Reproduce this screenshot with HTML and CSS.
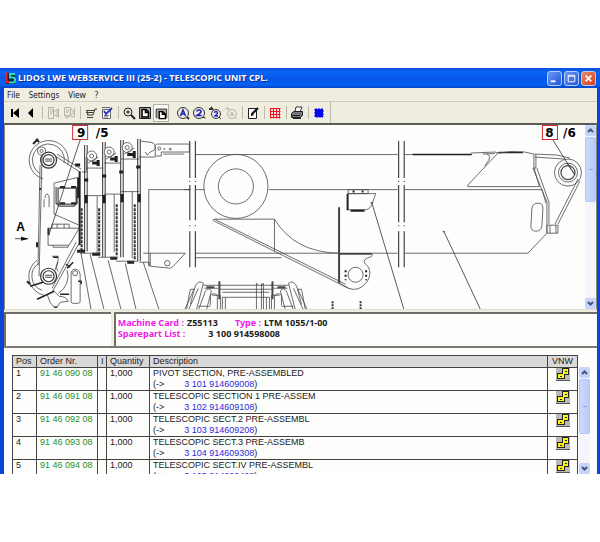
FILE: index.html
```
<!DOCTYPE html>
<html lang="en">
<head>
<meta charset="utf-8">
<title>LIDOS LWE WEBSERVICE III</title>
<link rel="stylesheet" href="styles.css">
</head>
<body>
<svg class="defs" aria-hidden="true">
  <symbol id="vnw" viewBox="0 0 14 13">
    <path fill="#b9b9b9" d="M0 0h14v12H0z"/><path fill="#555" d="M0 12h14v1H0z"/>
    <path fill="#222" d="M6 0h7v7H6zM1 5h8v6H1z"/>
    <path fill="#fbf414" d="M7 1h5v5H7zM2 6h6v4H2z"/>
    <path fill="#222" d="M9 3h2v1H9zM4 8h2v1H4z"/>
  </symbol>
  <symbol id="up" viewBox="0 0 11 11"><path fill="none" stroke="#43557f" stroke-width="2" d="M3 7l2.500-2.500L8 7"/></symbol>
  <symbol id="down" viewBox="0 0 11 11"><path fill="none" stroke="#43557f" stroke-width="2" d="M3 4l2.500 2.500L8 4"/></symbol>
</svg>
<main class="window">
  <header class="titlebar">
    <svg class="logo" viewBox="0 0 11 12"><path fill="#1b2438" d="M1 1h9v11H1z"/><path fill="none" stroke="#e8232b" stroke-width="2" d="M1.500 0v10h3"/><path fill="none" stroke="#35d6c4" stroke-width="2" d="M10 2H5v3.500h3q2 0 2 2.500t-2 2.500H4"/></svg>
    <h1>LIDOS LWE WEBSERVICE III (25-2) - TELESCOPIC UNIT CPL.</h1>
    <button class="cap" aria-label="Minimize"><svg viewBox="0 0 14 14"><path fill="#fff" d="M3 9h5v2H3z"/></svg></button>
    <button class="cap" aria-label="Maximize"><svg viewBox="0 0 14 14"><path fill="none" stroke="#fff" d="M3.500 3.500h7v7h-7zM3 4.500h8"/></svg></button>
    <button class="cap close" aria-label="Close"><svg viewBox="0 0 14 14"><path fill="none" stroke="#fff" stroke-width="2" d="M4 4l6 6M10 4l-6 6"/></svg></button>
  </header>
  <nav class="menu"><button>File</button><button>Settings</button><button>View</button><button>?</button></nav>
  <div class="toolbar">
    <button aria-label="First"><svg viewBox="0 0 16 16"><path d="M4 4h2v8H4zM12 3v10L6 8z"/></svg></button>
    <button aria-label="Previous"><svg viewBox="0 0 16 16"><path d="M10 3v10L5 8z"/></svg></button>
    <i class="sep"></i>
    <button aria-label="Previous page"><svg viewBox="0 0 16 16" fill="none" stroke="#b5b3a6"><path d="M3.500 2.500h5v11h-5zM5 5h3M5 7h3M5 9h2M13.500 3v10M12 4v8L8 8z"/></svg></button>
    <button aria-label="Next page"><svg viewBox="0 0 16 16" fill="none" stroke="#b5b3a6"><path d="M3.500 2.500h6v8h-6zM5 5h3M5 7h3M13.500 3v9h-4M5 10v3l4-2M10 4l3 3-3 3"/></svg></button>
    <i class="sep"></i>
    <button aria-label="Order"><svg viewBox="0 0 16 16" fill="none" stroke="#3c3c3c"><path d="M14 4h-2l-2 6H4M3 5.500h8M3 7.500h7M4 6l1 4M4 12.500h6"/></svg></button>
    <button aria-label="Order list"><svg viewBox="0 0 16 16" fill="none"><path fill="#fff" stroke="#666" d="M3.500 4.500h8v9h-8z"/><path stroke="#667" d="M5 10.500h5M5 12h4M3 2.500h8"/><path stroke="#2a35c8" stroke-width="2" d="M5 6l2 3 6-6"/></svg></button>
    <i class="sep"></i>
    <button aria-label="Zoom"><svg viewBox="0 0 16 16" fill="none" stroke="#222"><circle cx="7" cy="7" r="4"/><path d="M5 7h4M7 5v4"/><path stroke-width="2" d="M10 10l4 4"/></svg></button>
    <button aria-label="Fit page"><svg viewBox="0 0 16 16" stroke="#222"><path fill="#aaa" d="M2.500 2.500h11v11h-11z"/><path fill="#fff" stroke="#000" stroke-width="1.500" d="M5 4.500h4l2.500 2.500v5H5zM8.500 4.500V7.500h3"/></svg></button>
    <button class="pressed" aria-label="Fit width"><svg viewBox="0 0 16 16" stroke="#222"><path fill="#aaa" d="M2.500 14V3.500h12V14"/><path fill="#fff" stroke="#000" stroke-width="1.500" d="M6 14.500V6.500h4l3 2.500v5.500zM9.500 6.500V9.500h3"/></svg></button>
    <i class="sep blank"></i>
    <button aria-label="Find A"><svg viewBox="0 0 16 16" fill="none" stroke="#343434"><circle cx="8" cy="8" r="5.500"/><path stroke-width="2" d="M12 12l2 2"/><path stroke="#2222c8" stroke-width="1.600" d="M5.500 11L8 5l2.500 6M6.500 9h3"/></svg></button>
    <button aria-label="Find 2"><svg viewBox="0 0 16 16" fill="none" stroke="#343434"><circle cx="8" cy="8" r="5.500"/><path d="M11 12.500h3v1"/><path stroke="#2222c8" stroke-width="1.600" d="M6 6.500q0-1.500 2-1.500t2 1.500-4 4h4.500"/></svg></button>
    <button aria-label="Find next 2"><svg viewBox="0 0 16 16" fill="none" stroke="#343434"><circle cx="9" cy="9" r="4.500"/><path d="M12 12l2 2"/><path stroke-width="2" d="M2 4h4M4 2l2 3"/><path stroke="#2222c8" stroke-width="1.400" d="M7.500 8q0-1.500 1.500-1.500t1.500 1.500-3 3H11"/></svg></button>
    <button aria-label="Find next A"><svg viewBox="0 0 16 16" fill="none" stroke="#b5b3a6"><circle cx="9" cy="9" r="4.500"/><path d="M12 12l2 2M2 4h4M4 2l2 3M7 11l2-4 2 4M8 10h2"/></svg></button>
    <i class="sep"></i>
    <button aria-label="Edit note"><svg viewBox="0 0 16 16"><path fill="#fff" stroke="#222" d="M3.500 3.500h8v10h-8z"/><path stroke="#111" stroke-width="2" d="M13 3L7 9"/><path d="M6 8v3l3-1z"/></svg></button>
    <i class="sep"></i>
    <button aria-label="Grid"><svg viewBox="0 0 16 16"><path fill="#fbdada" d="M3 3h10v10H3z"/><path fill="none" stroke="#e01b25" stroke-width="1" d="M3.500 3v10.500M6.500 3v10.500M9.500 3v10.500M12.500 3v10.500M3 3.500h10.500M3 6.500h10.500M3 9.500h10.500M3 12.500h10.500"/></svg></button>
    <i class="sep"></i>
    <button aria-label="Print"><svg viewBox="0 0 16 16"><path fill="#fff" stroke="#333" d="M6 7l1-5h6l-2 5z"/><path fill="#777" stroke="#222" d="M2.500 8.500l2-2h9v4l-2 2h-9z"/><path stroke="#222" d="M4 13.500h8M3 10.500h8"/></svg></button>
    <i class="sep"></i>
    <button aria-label="Stop"><svg viewBox="0 0 16 16"><path fill="#0606ee" stroke="#0606ee" stroke-dasharray="2 1" d="M4 4h8v8H4z"/></svg></button>
    <i class="sep end"></i>
  </div>

  <section class="drawing" aria-label="Telescopic unit drawing">
    <svg class="plan" viewBox="5 125 579 184" fill="none" stroke="#4a4a4a" stroke-width=".8">
      <defs>
        <g id="halfrig">
          <path d="M184 310l12-26q3-4 7-1l-7 27M188 310l10-22M190 289h4l-4 15M198 310l7-19q4-5 6 0l-5 19M186 310l4-21M210 305v-10q3-3 7 0v15M203 285h18M204 288h14M212 295h8v14M198 306h12M222 297v13M225 297v13"/>
          <path stroke-width="2" d="M219 281v18M206 287h8"/>
        </g>
      </defs>
      <!-- main boom -->
      <path d="M195 154.500h202M404 154.500h66M184 189.500h6M195 189.500h9M268 189.500h129M404 189.500h137M148 189.500h42M195 253h143M371 253h26M404 253h123M195 257.500h86M150 253h35l-12 13-3 2-20-2z"/>
      <path stroke="#222" stroke-width="1" d="M189.500 141v37M195 141v37M189.500 185v35M195 185v35M189.500 231v36M195 231v36M398 141v37M403.500 141v37M398 185v37M403.500 185v37M398 231v36M403.500 231v36M189.500 181v1M195 181v1M189.500 225v1M195 225v1M398 181v1M403.500 181v1M398 225v1M403.500 225v1"/>
      <circle cx="235.500" cy="186.300" r="32"/><circle cx="235.500" cy="186.300" r="17.500"/><circle cx="167" cy="263" r="2.700"/>
      <!-- wedge and cylinder bracket -->
      <path d="M214 219h60v32M274 219q20 33 64 34M214 219l131 65M214 221l134 67M213 219v2"/>
      <path stroke="#444" stroke-width="2" d="M338.500 207v76M338 253.500h33"/>
      <path d="M371 253q2 3-2 4-7 2-5 6c6 4 7 12 2 19q-8 10-18 6l-9-5"/><circle cx="355" cy="274.500" r="7.500"/>
      <path stroke="#222" stroke-width="2" stroke-dasharray="2 2.500" d="M345 270v10M365.500 270v10"/>
      <path d="M347.500 189.500h20v4h-20zM347 193.500h28q-1 3-3 9-2 6-6 7h-19z"/>
      <path stroke="#222" stroke-width="2" d="M352 191.500h2M361 191.500h2M347 194v16M350 210.500h14"/>
      <path stroke="#333" d="M371 202l32.500 108M443 231l37 79"/>
      <path stroke="#333" stroke-width="2" d="M371 202v1M443 231v1M332 301v9M360 301v9" stroke-dasharray="2 1"/>
      <!-- boom head, right end -->
      <path stroke="#222" stroke-width="1.400" d="M412 154.500h59M498 152.500h24"/>
      <path d="M470 153l24-1 4 1 12-1.500 14 .5 9 2M482 154l12-.5M467 185l31-33M486 154q4 1 2 6l-4 6M467 185v1.500h71.500l-5.500-19"/>
      <path d="M534 154l22 1 13 3M534 157l22 1.500 8 .5M533 154v14h2v-14M532 168l14 34v31M536 168l12 34v22M541 189l4 14M546 233l-19 20M546 225h11v8h-11zM549 225v8M555 225v8M579 181l-22 43M577 179l-23 45"/>
      <circle cx="567" cy="172.500" r="13.500"/><circle cx="567" cy="172.500" r="9.500"/><circle cx="567" cy="172.500" r="7" stroke-width="1.200"/>
      <path d="M531 208q1-5 6-5t5 5l-1 18q-1 5-6 5t-5-5z"/>
      <path stroke="#333" d="M552 140l22 35M566 163l8 12"/>
      <!-- telescopic stages -->
      <path d="M86 168h17M104 163h17M121 159h18M139 157h16M86 195.500h17M104 194h17M121 191.500h18M82 172h4v-15M97 196v57M114 194v58M132 191v67M148.500 190v76M139 262h10v4M143 253h7"/>
      <path stroke="#333" stroke-width="1" d="M84.500 145v106M87 145v106M102.500 142v115M105 142v115M120.500 140v117M123 140v117M137.500 139v122M140 139v122"/>
      <path stroke="#333" stroke-width="2" stroke-dasharray="3 1" d="M81.500 208v43M99 208v46M116.500 204v52M134.500 204v56"/>
      <path stroke="#1f1f1f" stroke-width="2" d="M79.500 171v74"/>
      <g fill="#fff"><circle cx="91.500" cy="156" r="5"/><circle cx="109" cy="152" r="5"/><circle cx="127" cy="147.500" r="5"/></g>
      <circle cx="91.500" cy="156" r="2"/><circle cx="109" cy="152" r="2"/><circle cx="127" cy="147.500" r="2"/>
      <path stroke="#1f1f1f" stroke-width="3" d="M92 163h6M110 159h6M127 154.500h6M98 160v6M116 156v6M134 151v7M75 165h5M84 180h4M102 176h4M119 172h4M136 167h4M86 195v8M104 195v8M122 194v8M139 194v8M77 251h8M92 254h8M110 258h7M127 262h7"/>
      <path d="M80 253h20M98 257h20M116 261h22M88 163l10-6M106 159l10-6M124 154l10-6"/>
      <path d="M140 141l8 1q6 0 7 4t-5 6l-3 3-2-3M155 152v4h6v-4h28v-8h-31q-4 0-3 4zM163 154h21"/>
      <circle cx="159" cy="148.500" r="1.500"/><circle cx="170" cy="149" r="1"/><circle cx="164" cy="149" r=".5"/>
      <!-- boom head, left end -->
      <path d="M43 178.700A19.500 19.500 0 1 1 67.500 165M40 173.600A16 16 0 1 1 64 163"/>
      <g stroke="#333" stroke-width="1.200"><circle cx="48.500" cy="160" r="8"/><circle cx="48.500" cy="160" r="5.500"/><circle cx="48.500" cy="276" r="8"/><circle cx="48.500" cy="276" r="5.500"/></g>
      <circle cx="41.500" cy="151" r="4"/><circle cx="41.500" cy="151" r="1.500"/>
      <path stroke="#222" stroke-width="2" d="M33 144l5-5M36 139l3 3M37 242v5M27 281l3 3M40 188v2"/>
      <path stroke="#222" d="M45 159h7M45 161h7M45 275h7M45 277h7"/>
      <path d="M42 155l-3 121M40 165l-2 100M55 156l25 16M57 154l24 15M54 183l25-6M54 183v31l25 11M45 198q0-4 2-4t2 4v9M44 207v-8"/>
      <path stroke-width="1.200" d="M58 188h18v16H58zM56 187v16l3 3h15l3-3v-16"/>
      <path stroke="#222" stroke-width="2" d="M60 187h5M71 187h5M60 203h5M71 203h5M78 178v20"/>
      <path d="M48 228h31l-10 17H48zM52 224h17v4M52 224v4M53 245v2h15v-2M57 224v4M64 224v4"/>
      <path stroke="#333" stroke-width="2" d="M48.500 228v7"/>
      <path stroke="#333" d="M80 140l-15 45-16 49"/>
      <path d="M37 260A19.500 19.500 0 0 0 44 295M39 263A15 15 0 0 0 42 290M67 270A19.500 19.500 0 0 1 58 293M79 243l-27 49M76 242l-24 46M52 256h6v4l-3 10M58 262q-3 6 0 9"/>
      <path stroke="#222" stroke-width="1.500" d="M30 286l13-4M37 299l17-8M53 257h5M67 268l6-6M66 264l4 3M78 281h3v3M60 294h9M54 307h3"/>
      <path d="M47 294l3 8 4 5h3l3-5 8-1q-2-5-9-5l-6-6M71 274v27q0 2 2 2h5q2 0 2-2v-27q-1-5-5-5t-4 5"/><circle cx="75" cy="273" r="2.500"/>
      <path stroke="#444" d="M80 248l11 62M90 254l14 56M108 260l13 50M125 263l11 47M143 262l16 48"/>
      <!-- lower rig -->
      <use href="#halfrig"/><use href="#halfrig" transform="translate(491 0) scale(-1 1)"/>
      <path d="M219 285h53M219 289h53M222 292h47M222 297h47M256 310v-27M261 310v-27M263 310v-27M256 283l2 2M263 283l-2 2"/>
      <path stroke="#222" d="M15 238.500h12"/><path fill="#111" stroke="none" d="M21 236.500l8 2-8 2z"/>
      <g fill="#fff" stroke="#d22b33" stroke-width="1"><path d="M72.500 125.500h15v14h-15zM541.500 125.500h15v14h-15z"/></g>
      <g class="callout" fill="#000" stroke="none"><text x="81" y="137" text-anchor="middle">9</text><text x="102" y="137" text-anchor="middle">/5</text><text x="548.500" y="137" text-anchor="middle">8</text><text x="568.500" y="137" text-anchor="middle">/6</text><text class="view" x="20.500" y="231" text-anchor="middle">A</text></g>
    </svg>
    <div class="scroll" aria-hidden="true"><svg class="arrow"><use href="#up"/></svg><i class="thumb"></i><svg class="arrow last"><use href="#down"/></svg></div>
  </section>

  <section class="info">
    <div class="blank-pane"></div>
    <dl>
      <div><dt>Machine Card :</dt><dd>Z55113</dd><dt class="type">Type :</dt><dd>LTM 1055/1-00</dd></div>
      <div><dt>Sparepart List :</dt><dd class="list-no">3 100 914598008</dd></div>
    </dl>
  </section>

  <section class="parts">
    <table>
      <colgroup><col class="c-pos"><col class="c-order"><col class="c-i"><col class="c-qty"><col><col class="c-vnw"></colgroup>
      <thead><tr><th>Pos</th><th>Order Nr.</th><th>I</th><th>Quantity</th><th>Description</th><th class="vnw">VNW</th></tr></thead>
      <tbody>
        <tr><td>1</td><td><a href="#">91 46 090 08</a></td><td></td><td>1,000</td><td>PIVOT SECTION, PRE-ASSEMBLED<div class="ref">(-&gt;<a href="#">3 101 914609008</a>)</div></td><td class="vnw"><button aria-label="Where used"><svg><use href="#vnw"/></svg></button></td></tr>
        <tr><td>2</td><td><a href="#">91 46 091 08</a></td><td></td><td>1,000</td><td>TELESCOPIC SECTION 1 PRE-ASSEM<div class="ref">(-&gt;<a href="#">3 102 914609108</a>)</div></td><td class="vnw"><button aria-label="Where used"><svg><use href="#vnw"/></svg></button></td></tr>
        <tr><td>3</td><td><a href="#">91 46 092 08</a></td><td></td><td>1,000</td><td>TELESCOPIC SECT.2 PRE-ASSEMBL<div class="ref">(-&gt;<a href="#">3 103 914609208</a>)</div></td><td class="vnw"><button aria-label="Where used"><svg><use href="#vnw"/></svg></button></td></tr>
        <tr><td>4</td><td><a href="#">91 46 093 08</a></td><td></td><td>1,000</td><td>TELESCOPIC SECT.3 PRE-ASSEMB<div class="ref">(-&gt;<a href="#">3 104 914609308</a>)</div></td><td class="vnw"><button aria-label="Where used"><svg><use href="#vnw"/></svg></button></td></tr>
        <tr><td>5</td><td><a href="#">91 46 094 08</a></td><td></td><td>1,000</td><td>TELESCOPIC SECT.IV PRE-ASSEMBL<div class="ref">(-&gt;<a href="#">3 105 914609408</a>)</div></td><td class="vnw"><button aria-label="Where used"><svg><use href="#vnw"/></svg></button></td></tr>
      </tbody>
    </table>
    <div class="scroll list-scroll" aria-hidden="true"><svg class="arrow"><use href="#up"/></svg><i class="thumb"></i><svg class="arrow last"><use href="#down"/></svg></div>
  </section>
</main>
</body>
</html>
```
FILE: styles.css
```
* { box-sizing: border-box; }
body { margin: 68px 0 0; background: #fff; font-family: "Liberation Sans", Arial, sans-serif; color: #222; }
button { display: block; margin: 0; padding: 0; border: 0; background: none; font: inherit; color: inherit; }
svg { display: block; }
a { text-decoration: none; }
.defs { position: absolute; width: 0; height: 0; }

.window { border: solid #0b45d8; border-width: 0 3px 0 4px; background: #efece0; }

.titlebar { display: flex; align-items: center; gap: 2px; height: 20px; margin: 0 -3px 0 -4px; padding: 0 4px 0 5px; background: linear-gradient(#0a50dc, #0a66f4 20%, #0457e8 50%, #0560f2 85%, #0444c4); color: #fff; }
.titlebar h1 { flex: 1; margin: 0; font: bold 9px/20px "Open Sans", sans-serif; white-space: nowrap; text-shadow: 1px 1px #0a2f96; }
.logo { width: 11px; height: 12px; }
.cap { width: 15px; height: 15px; border: 1px solid #b9cdf8; border-radius: 3px; background: linear-gradient(135deg, #6a97f5, #2457dc); }
.cap svg { width: 100%; height: 100%; }
.cap.close { background: linear-gradient(135deg, #ee8a68, #d53f18); }

.menu { display: flex; gap: 9px; height: 14px; padding-left: 3px; border-bottom: 1px solid #cfccc0; font: 8px/12px "Noto Sans", sans-serif; }

.toolbar { display: flex; align-items: center; height: 21px; padding-left: 3px; }
.toolbar button { width: 16px; height: 18px; }
.toolbar button svg { width: 16px; height: 16px; }
.toolbar .pressed { border: 1px solid #b4b1a4; background: #faf9f4; }
.toolbar .pressed svg { width: 14px; }
.sep { width: 6px; height: 13px; background: linear-gradient(#bdbaab, #bdbaab) 3px 0 / 1px 100% no-repeat; }
.sep.blank { background: none; }
.sep.end { height: 21px; }

.drawing { display: flex; border: 1px solid #8b887d; border-top: 2px solid #5c5a55; border-bottom-color: #e0ddd0; background: #fdfdfc; }
.plan { flex: 1; min-width: 0; }
.callout { font: bold 12px "DejaVu Sans", sans-serif; }
.callout .view { font: bold 12px "Liberation Sans", sans-serif; }

.scroll { display: flex; flex-direction: column; flex: none; width: 11px; background: #f5f5fb; }
.arrow { flex: none; width: 11px; height: 11px; border-radius: 2px; background: #c6d4fb; }
.arrow.last { margin-top: auto; }
.thumb { height: 35%; margin-top: 1px; border: 1px solid #b4c6f5; border-radius: 2px; background: linear-gradient(#8fa8e8, #8fa8e8) center / 4px 1px no-repeat, linear-gradient(90deg, #ccd9fe, #bacbfa); }

.info { display: flex; gap: 3px; padding-top: 2px; height: 36px; }
.blank-pane, .info dl { margin: 0; border: 1px solid #716e68; border-width: 2px 0 0 2px; background: #fdfdfc; }
.blank-pane { width: 18%; }
.info dl { flex: 1; padding: 3px 0 0 2px; font: bold 9px/11px "Noto Sans", sans-serif; white-space: nowrap; }
.info dl div { display: flex; gap: 3px; }
.info dt { color: #f01ce8; }
.info dd { margin: 0; }
.info .type { margin-left: 14px; }
.info .list-no { margin-left: 20px; }

.parts { display: flex; align-items: flex-start; height: 128px; overflow: hidden; padding: 7px 7px 0 8px; border-top: 2px solid #7d7a75; background: #fdfdfc; }
table { flex: 1; width: 100%; table-layout: fixed; border-collapse: collapse; font-size: 9px; line-height: 11px; white-space: nowrap; }
.c-pos { width: 24px; } .c-order { width: 61px; } .c-i { width: 9px; } .c-qty { width: 43px; } .c-vnw { width: 30px; }
th, td { padding: 0 3px; border: 1px solid #444; text-align: left; vertical-align: top; font-weight: normal; }
th { background: #d9d9d9; }
tr td { height: 23px; }
td:nth-child(2) a { color: #1f8f2b; }
.ref { display: flex; }
.ref a { margin-left: 20px; color: #2c2cd8; }
th.vnw, td.vnw { padding: 0; text-align: center; }
.vnw button { margin: 0 auto; }
.vnw svg { width: 14px; height: 13px; }
.list-scroll { height: 107px; margin: 12px 0 0 1px; }
.list-scroll .thumb { height: 55px; }
```
